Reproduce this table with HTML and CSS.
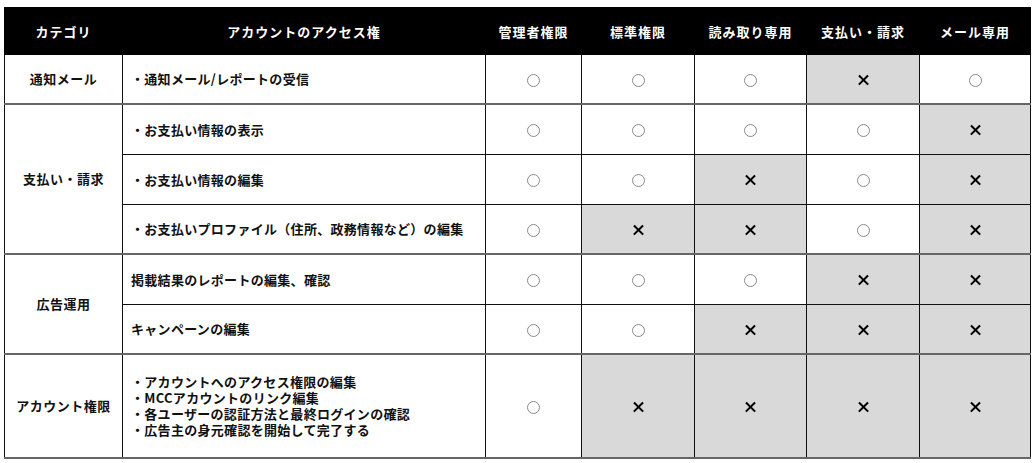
FILE: index.html
```html
<!DOCTYPE html>
<html lang="ja">
<head>
<meta charset="utf-8">
<link rel="stylesheet" href="styles.css">
</head>
<body>
<table class="perm">
  <colgroup>
    <col class="c-cat"><col class="c-acc"><col class="c-admin"><col class="c-std"><col class="c-ro"><col class="c-pay"><col class="c-mail">
  </colgroup>
  <thead>
    <tr>
      <th>カテゴリ</th><th>アカウントのアクセス権</th><th>管理者権限</th><th>標準権限</th><th>読み取り専用</th><th>支払い・請求</th><th>メール専用</th>
    </tr>
  </thead>
  <tbody>
    <tr class="grp-end">
      <td class="cat">通知メール</td>
      <td class="acc">・通知メール/レポートの受信</td>
      <td class="ok"><span class="o"></span></td><td class="ok"><span class="o"></span></td><td class="ok"><span class="o"></span></td><td class="ng"><span class="x"></span></td><td class="ok"><span class="o"></span></td>
    </tr>
    <tr>
      <td class="cat" rowspan="3">支払い・請求</td>
      <td class="acc">・お支払い情報の表示</td>
      <td class="ok"><span class="o"></span></td><td class="ok"><span class="o"></span></td><td class="ok"><span class="o"></span></td><td class="ok"><span class="o"></span></td><td class="ng"><span class="x"></span></td>
    </tr>
    <tr>
      <td class="acc">・お支払い情報の編集</td>
      <td class="ok"><span class="o"></span></td><td class="ok"><span class="o"></span></td><td class="ng"><span class="x"></span></td><td class="ok"><span class="o"></span></td><td class="ng"><span class="x"></span></td>
    </tr>
    <tr class="grp-end">
      <td class="acc">・お支払いプロファイル（住所、政務情報など）の編集</td>
      <td class="ok"><span class="o"></span></td><td class="ng"><span class="x"></span></td><td class="ng"><span class="x"></span></td><td class="ok"><span class="o"></span></td><td class="ng"><span class="x"></span></td>
    </tr>
    <tr>
      <td class="cat" rowspan="2">広告運用</td>
      <td class="acc">掲載結果のレポートの編集、確認</td>
      <td class="ok"><span class="o"></span></td><td class="ok"><span class="o"></span></td><td class="ok"><span class="o"></span></td><td class="ng"><span class="x"></span></td><td class="ng"><span class="x"></span></td>
    </tr>
    <tr class="grp-end">
      <td class="acc">キャンペーンの編集</td>
      <td class="ok"><span class="o"></span></td><td class="ok"><span class="o"></span></td><td class="ng"><span class="x"></span></td><td class="ng"><span class="x"></span></td><td class="ng"><span class="x"></span></td>
    </tr>
    <tr class="tall">
      <td class="cat">アカウント権限</td>
      <td class="acc multi">・アカウントへのアクセス権限の編集<br>・MCCアカウントのリンク編集<br>・各ユーザーの認証方法と最終ログインの確認<br>・広告主の身元確認を開始して完了する</td>
      <td class="ok"><span class="o"></span></td><td class="ng"><span class="x"></span></td><td class="ng"><span class="x"></span></td><td class="ng"><span class="x"></span></td><td class="ng"><span class="x"></span></td>
    </tr>
  </tbody>
</table>
</body>
</html>
```
FILE: styles.css
```css
html, body {
  margin: 0;
  padding: 0;
  background: #fff;
}
body {
  padding: 7px 4px 0 4px;
  font-family: "Noto Sans CJK JP", "Noto Sans", sans-serif;
  font-weight: 700;
  font-size: 13px;
  color: #111;
}
.perm {
  border-collapse: collapse;
  table-layout: fixed;
  width: 1026px;
}
.c-cat { width: 118px; }
.c-acc { width: 363px; }
.c-admin { width: 96px; }
.c-std { width: 113px; }
.c-ro { width: 112px; }
.c-pay { width: 113px; }
.c-mail { width: 111px; }

.perm th {
  background: #000;
  color: #fff;
  height: 46px;
  padding: 0;
  font-weight: 700;
  font-size: 13px;
  letter-spacing: 1px;
  text-align: center;
  border: 1px solid #000;
}
.perm td {
  height: 49px;
  padding: 0;
  border: 1px solid #111;
  text-align: center;
  vertical-align: middle;
  line-height: 16px;
}
.perm tr.grp-end td {
  height: 48px;
  border-bottom: 2px solid #666;
}
.perm tr.tall td {
  height: 102px;
  border-bottom: 2px solid #666;
}
.perm td.cat {
  text-align: center;
  letter-spacing: 0.5px;
  border-bottom: 2px solid #666;
}
.perm td.acc {
  text-align: left;
  padding-left: 8px;
  letter-spacing: 0.3px;
}
.perm td.ng {
  background: #d9d9d9;
}
.o {
  display: inline-block;
  width: 11px;
  height: 11px;
  border: 1px solid #8a8a8a;
  border-radius: 50%;
  vertical-align: middle;
}
.x {
  display: inline-block;
  position: relative;
  width: 11px;
  height: 11px;
  vertical-align: middle;
}
.x::before, .x::after {
  content: "";
  position: absolute;
  left: -1px;
  top: 4px;
  width: 13px;
  height: 2.2px;
  background: #000;
}
.x::before { transform: rotate(45deg); }
.x::after { transform: rotate(-45deg); }
```
